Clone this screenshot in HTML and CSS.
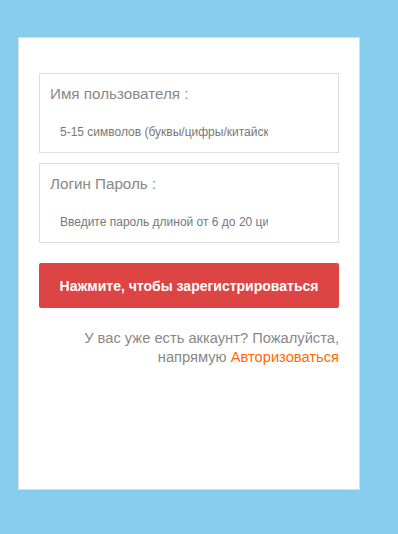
FILE: index.html
```html
<!DOCTYPE html>
<html lang="ru">
<head>
  <meta charset="utf-8">
  <title>Регистрация</title>
  <link rel="stylesheet" href="styles.css">
</head>
<body>
  <div class="reg-container">
    <div class="form-group">
      <label for="username">Имя пользователя :</label>
      <input type="text" id="username" placeholder="5-15 символов (буквы/цифры/китайские иероглифы)" />
    </div>
    <div class="form-group">
      <label for="password">Логин Пароль :</label>
      <input type="password" id="password" placeholder="Введите пароль длиной от 6 до 20 цифр" />
    </div>
    <button class="btn-reg">Нажмите, чтобы зарегистрироваться</button>
    <p class="login-hint">У вас уже есть аккаунт? Пожалуйста, напрямую <a href="#">Авторизоваться</a></p>
  </div>
</body>
</html>
```

FILE: styles.css
```css
body {
  font-family: 'Liberation Sans', Arial, sans-serif;
  background: #87cdee;
  margin: 0;
  padding: 37px 0 0 18px;
}

.reg-container {
  box-sizing: border-box;
  background: white;
  border: 1px solid #ddd;
  width: 342px;
  height: 453px;
  padding: 35px 20px;
}

.form-group {
  box-sizing: border-box;
  height: 80px;
  border: 1px solid #ddd;
  padding: 11px 10px 0;
  margin-bottom: 10px;
}

.form-group label {
  display: block;
  font-size: 15.2px;
  line-height: 18px;
  color: #888;
}

.form-group input {
  display: block;
  margin-top: 19px;
  width: 208px;
  padding: 0 10px;
  height: 20px;
  border: none;
  outline: none;
  font-family: inherit;
  font-size: 12px;
  color: #555;
}

.form-group input::placeholder {
  color: #777;
}

.btn-reg {
  display: block;
  width: 100%;
  height: 45px;
  margin-top: 20px;
  background: #dd4444;
  border: none;
  border-radius: 2px;
  color: white;
  font-family: inherit;
  font-size: 14px;
  font-weight: bold;
  cursor: pointer;
}

.login-hint {
  margin: 21px 0 0;
  text-align: right;
  font-size: 14.7px;
  line-height: 19px;
  color: #888;
}

.login-hint a {
  color: #ff6a00;
  text-decoration: none;
}
```
